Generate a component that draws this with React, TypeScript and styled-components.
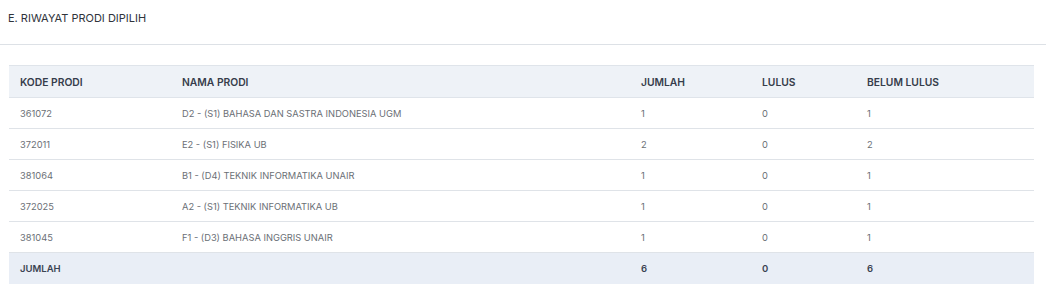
import styled, { createGlobalStyle } from "styled-components";

const GlobalStyle = createGlobalStyle`
  html, body {
    margin: 0;
    padding: 0;
    background: #ffffff;
    font-family: Inter, "Noto Sans", sans-serif;
  }
`;

type Row = {
  kode: string;
  nama: string;
  jumlah: number;
  lulus: number;
  belum: number;
};

const rows: Row[] = [
  { kode: "361072", nama: "D2 - (S1) BAHASA DAN SASTRA INDONESIA UGM", jumlah: 1, lulus: 0, belum: 1 },
  { kode: "372011", nama: "E2 - (S1) FISIKA UB", jumlah: 2, lulus: 0, belum: 2 },
  { kode: "381064", nama: "B1 - (D4) TEKNIK INFORMATIKA UNAIR", jumlah: 1, lulus: 0, belum: 1 },
  { kode: "372025", nama: "A2 - (S1) TEKNIK INFORMATIKA UB", jumlah: 1, lulus: 0, belum: 1 },
  { kode: "381045", nama: "F1 - (D3) BAHASA INGGRIS UNAIR", jumlah: 1, lulus: 0, belum: 1 },
];

const Card = styled.section`
  width: 1046px;
  background: #fff;
`;

const CardHeader = styled.header`
  height: 45px;
  padding: 0 8px;
  display: flex;
  align-items: flex-start;
  border-bottom: 1px solid #dde1e6;
  box-sizing: border-box;
  h2 {
    margin: 11px 0 0;
    font-size: 11px;
    font-weight: 400;
    color: #30343b;
  }
`;

const Body = styled.div`
  padding: 20px 12px 0 9px;
`;

const Table = styled.table`
  width: 1025px;
  border-collapse: collapse;
  table-layout: fixed;
`;

const HeadCell = styled.th`
  text-align: left;
  height: 31px;
  padding: 0 11px;
  font-weight: 600;
  font-size: 10.3px;
  color: #363d4b;
  background: #eef2f7;
  border-top: 1px solid #dfe4ea;
  border-bottom: 1px solid #dfe4ea;
`;

const Cell = styled.td`
  height: 30px;
  padding: 0 11px;
  font-size: 9.3px;
  color: #6b6f76;
  border-bottom: 1px solid #dfe3e8;
`;

const FootCell = styled.td`
  height: 31px;
  padding: 0 11px;
  font-weight: 600;
  font-size: 9.5px;
  color: #3b4352;
  background: #e9eef6;
`;

export default function App() {
  const total = rows.reduce((s, r) => s + r.jumlah, 0);
  const lulus = rows.reduce((s, r) => s + r.lulus, 0);
  const belum = rows.reduce((s, r) => s + r.belum, 0);
  return (
    <>
      <GlobalStyle />
      <Card>
        <CardHeader>
          <h2>E. RIWAYAT PRODI DIPILIH</h2>
        </CardHeader>
        <Body>
          <Table>
            <colgroup>
              <col style={{ width: 162 }} />
              <col style={{ width: 459 }} />
              <col style={{ width: 121 }} />
              <col style={{ width: 105 }} />
              <col style={{ width: 178 }} />
            </colgroup>
            <thead>
              <tr>
                <HeadCell>KODE PRODI</HeadCell>
                <HeadCell>NAMA PRODI</HeadCell>
                <HeadCell>JUMLAH</HeadCell>
                <HeadCell>LULUS</HeadCell>
                <HeadCell>BELUM LULUS</HeadCell>
              </tr>
            </thead>
            <tbody>
              {rows.map((r) => (
                <tr key={r.kode}>
                  <Cell>{r.kode}</Cell>
                  <Cell>{r.nama}</Cell>
                  <Cell>{r.jumlah}</Cell>
                  <Cell>{r.lulus}</Cell>
                  <Cell>{r.belum}</Cell>
                </tr>
              ))}
            </tbody>
            <tfoot>
              <tr>
                <FootCell>JUMLAH</FootCell>
                <FootCell />
                <FootCell>{total}</FootCell>
                <FootCell>{lulus}</FootCell>
                <FootCell>{belum}</FootCell>
              </tr>
            </tfoot>
          </Table>
        </Body>
      </Card>
    </>
  );
}
